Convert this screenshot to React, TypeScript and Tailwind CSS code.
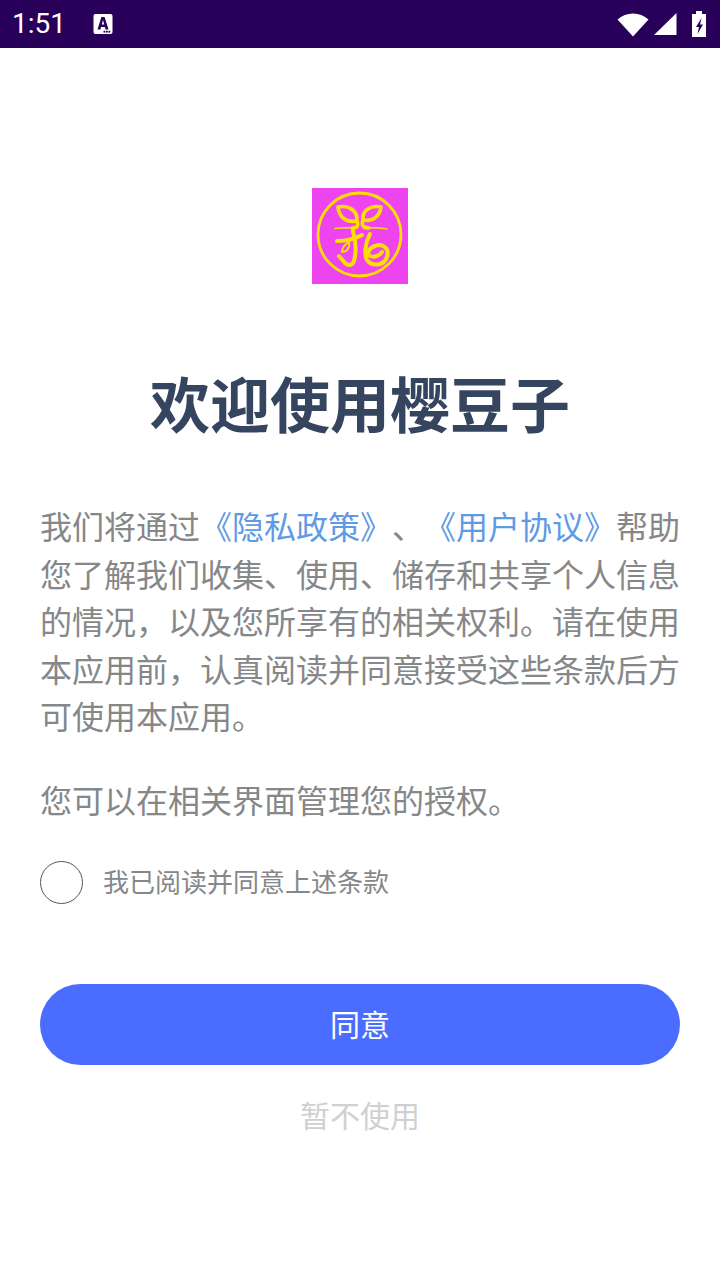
const cjk = "font-['Noto_Sans_CJK_SC','Noto_Sans',sans-serif] [text-spacing-trim:space-all]";

function StatusBar() {
  return (
    <div className="flex h-12 items-center bg-[#280059] text-white">
      <span className="ml-3 font-['Roboto',sans-serif] text-[28px] leading-none">1:51</span>
      <svg className="ml-[27px]" width="20" height="20" viewBox="0 0 20 20">
        <rect x="0.5" y="0" width="19" height="20" rx="2" fill="#fff" />
        <path d="M4.5 15.5L8.4 3h3.2l3.9 12.5h-2.9l-.7-2.6H8.1l-.7 2.6zM8.8 10.5h2.4L10 6z" fill="#280059" />
        <rect x="10.5" y="16.8" width="1.8" height="1.8" fill="#280059" />
        <rect x="13" y="16.8" width="1.8" height="1.8" fill="#280059" />
        <rect x="15.5" y="16.8" width="1.8" height="1.8" fill="#280059" />
      </svg>
      <div className="ml-auto mr-[14px] flex items-center">
        <svg width="32" height="26" viewBox="0 0 32 26">
          <path d="M0.5 8.5C9 0.5 23 0.5 31.5 8.5L16 25.5z" fill="#fff" />
        </svg>
        <svg className="ml-[5px]" width="23" height="22" viewBox="0 0 23 22">
          <path d="M0 22L22.5 0v22z" fill="#fff" />
        </svg>
        <svg className="ml-[15px]" width="14" height="26" viewBox="0 0 14 26">
          <path d="M4 0h6v3h4v23H0V3h4z" fill="#fff" />
          <path d="M9.5 7L4 16h3l-1.5 7L11 13.5H8z" fill="#280059" />
        </svg>
      </div>
    </div>
  );
}

function Logo() {
  return (
    <svg width="96" height="96" viewBox="0 0 96 96">
      <rect width="96" height="96" fill="#ee44f0" />
      <circle cx="47.5" cy="46.5" r="41.5" fill="none" stroke="#fde000" strokeWidth="2.8" />
      <g fill="none" stroke="#fde000" strokeLinecap="round" strokeLinejoin="round">
        {/* leaves */}
        <path d="M45 33C34 35 27 29 26 19C36 17 46 22 45 33zM45 33C47 38 45 40 40 40" strokeWidth="3.6" />
        <path d="M51 32C61 34 68 28 69 19C59 17 50 22 51 32zM51 32C49 37 51 40 57 40" strokeWidth="3.6" />
        <path d="M23 40.5C30 39.5 38 39.5 45 40.5M53 40C61 39.5 69 40 75 41" strokeWidth="1.6" />
        {/* character */}
        <path d="M25 53C33 53 43 51 50 47" strokeWidth="4" />
        <path d="M41 43C44 54 44 66 42 73C40 78 36 78 33 75L27 68" strokeWidth="4" />
        <path d="M37 54C32 57 30 60 30 64C35 64 38 60 37 54z" strokeWidth="2" />
        <path d="M58 46C53 55 52 67 55 72C60 79 72 78 75 69C78 60 70 55 63 58C57 60 54 66 58 68C63 70 68 67 70 64" strokeWidth="4" />
      </g>
    </svg>
  );
}

export default function App() {
  return (
    <div className={`flex h-[1280px] w-[720px] flex-col bg-white ${cjk}`}>
      <StatusBar />
      <div className="flex flex-col items-center pt-[140px]">
        <Logo />
        <h1 className="mt-[80px] text-[60px] font-bold leading-[76px] text-[#35455f]">欢迎使用樱豆子</h1>
      </div>
      <div className="mt-[62px] pl-10 pr-[38px] text-[32px] leading-[47.5px] text-[#858789]">
        <p>
          我们将通过<span className="text-[#5f9ae6]">《隐私政策》</span>、<span className="text-[#5f9ae6]">《用户协议》</span>帮助您了解我们收集、使用、储存和共享个人信息的情况，以及您所享有的相关权利。请在使用本应用前，认真阅读并同意接受这些条款后方可使用本应用。
        </p>
        <p className="mt-[36px]">您可以在相关界面管理您的授权。</p>
      </div>
      <div className="mt-[38px] flex items-center px-10">
        <div className="h-[43px] w-[43px] rounded-full border border-[#555555]" />
        <span className="ml-5 pb-1 text-[26px] leading-[39px] text-[#858789]">我已阅读并同意上述条款</span>
      </div>
      <div className="mx-10 mt-20 flex h-[81px] items-center justify-center rounded-full bg-[#4b6dff] pb-0.5 text-[30px] text-white">
        同意
      </div>
      <div className="mt-[27px] text-center text-[30px] leading-[44px] text-[#d0d0d0]">暂不使用</div>
    </div>
  );
}
